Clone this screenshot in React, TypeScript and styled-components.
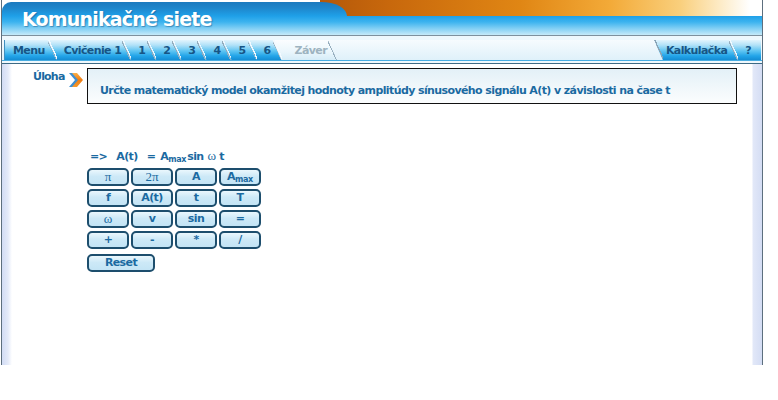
import React from "react";
import styled, { createGlobalStyle, css } from "styled-components";

const Global = createGlobalStyle`
  html, body { margin: 0; padding: 0; background: #ffffff; }
  body {
    font-family: "DejaVu Sans", Verdana, sans-serif;
    font-size: 11px;
    letter-spacing: -0.6px;
  }
`;

const TEXT_BLUE = "#1b6aa1";
const TAB_BLUE = "linear-gradient(#e2f4fd 0%, #b3e2f8 25%, #5ec4f2 55%, #22a4e8 80%, #158dd4 100%)";

const Frame = styled.div`
  margin-left: 1px;
  width: 760px;
  height: 365px;
  border-left: 1px solid #5d6f7e;
  border-right: 1px solid #5d6f7e;
  background: linear-gradient(
    to right,
    #d2dcf4 0px,
    #e4eaf9 6px,
    #ffffff 10px,
    #ffffff calc(100% - 10px),
    #e2e8f8 calc(100% - 9px),
    #d4ddf4 100%
  );
  display: flex;
  flex-direction: column;
`;

const Header = styled.header`
  display: flex;
  height: 35px;
  border-bottom: 1px solid #7e909d;
  background: #ffffff
    linear-gradient(
      to right,
      #b4580a 0px,
      #c8680c 70px,
      #e08614 200px,
      #f3aa38 290px,
      #f9cf7c 360px,
      #fdebc6 400px,
      #ffffff 430px
    )
    318px 0 / calc(100% - 318px) 16px no-repeat;
`;

const blueStops = (offset: number) => `linear-gradient(
  to bottom,
  #1a72b6 ${-2 - offset}px,
  #1e86cb ${8 - offset}px,
  #1fa0e8 ${16 - offset}px,
  #3cb3ef ${22 - offset}px,
  #7ccdf4 ${28 - offset}px,
  #c6eaf9 ${35 - offset}px
)`;

const TitleBlock = styled.div`
  width: 345px;
  margin-top: 2px;
  border-radius: 9px 26px 0 0 / 9px 14px 0 0;
  background: ${blueStops(2)};
  padding: 2px 0 0 20px;
  box-sizing: border-box;
`;

const Title = styled.h1`
  margin: 0;
  font-size: 19px;
  line-height: 30px;
  letter-spacing: -0.8px;
  font-weight: bold;
  color: #ffffff;
  text-shadow: 1px 1px 1px rgba(10, 70, 120, 0.45);
  white-space: nowrap;
`;

const RightBand = styled.div`
  flex: 1;
  margin-top: 16px;
  background: ${blueStops(16)};
`;

const NavStrip = styled.div`
  padding: 4px 0 2px;
  background: #eef8fd;
  border-bottom: 1px solid #3d6a84;
`;

const TabRow = styled.nav`
  display: flex;
  height: 20px;
  padding: 0 1px 0 2px;
  background: linear-gradient(#f6fbfe, #dff1fa);
  border-bottom: 1px solid #47ace1;
`;

const TabGroup = styled.div<{ $right?: boolean }>`
  display: flex;
  ${(p) => p.$right && css`margin-left: auto;`}
`;

const edgeLeft = (c: string) =>
  `linear-gradient(to top right, transparent 50%, ${c} 50%, ${c} calc(50% + 1.3px), transparent calc(50% + 1.3px)) left top / 9px 100% no-repeat`;
const edgeRight = `linear-gradient(to top right, transparent calc(50% - 1px), #93abbc calc(50% - 1px), #93abbc 50%, transparent 50%) right top / 9px 100% no-repeat`;

const Tab = styled.a<{ $first?: boolean; $last?: boolean; $off?: boolean; $pl?: number; $pr?: number }>`
  display: flex;
  align-items: center;
  height: 20px;
  box-sizing: border-box;
  padding: 1px ${(p) => p.$pr ?? 11}px 0 ${(p) => p.$pl ?? 16}px;
  margin-left: -9px;
  font-weight: bold;
  color: ${(p) => (p.$off ? "#9db3c0" : "#175585")};
  white-space: nowrap;
  cursor: pointer;
  clip-path: polygon(0 0, calc(100% - 9px) 0, 100% 100%, 9px 100%);
  background: ${edgeLeft("#f3faff")}, ${edgeRight},
    ${(p) => (p.$off ? "linear-gradient(#fbfdff, #eaf6fc 60%, #d5ecf8)" : TAB_BLUE)};
  ${(p) =>
    p.$first &&
    css`
      margin-left: 0;
      clip-path: polygon(0 0, calc(100% - 9px) 0, 100% 100%, 0 100%);
      background: ${edgeRight}, ${TAB_BLUE};
      border-left: 1px solid #3f8fc0;
    `}
  ${(p) =>
    p.$last &&
    css`
      clip-path: polygon(0 0, 100% 0, 100% 100%, 9px 100%);
      background: ${edgeLeft("#f3faff")}, ${TAB_BLUE};
    `}
`;

const EdgeTab = styled(Tab)`
  background: ${edgeLeft("#8aa3b5")}, ${edgeRight}, ${TAB_BLUE};
`;

const Content = styled.main`
  padding: 4px 0 0 31px;
`;

const TaskRow = styled.div`
  display: flex;
  align-items: flex-start;
`;

const TaskLabel = styled.span`
  width: 32px;
  font-weight: bold;
  color: ${TEXT_BLUE};
  line-height: 13px;
  letter-spacing: -0.8px;
  margin-top: 2px;
  white-space: nowrap;
`;

const ArrowIcon = styled.svg`
  margin: 4px 0 0 3px;
  flex: none;
`;

const TaskBox = styled.div`
  margin-left: 3px;
  width: 650px;
  height: 36px;
  box-sizing: border-box;
  border: 1px solid #111111;
  padding: 15px 0 0 12px;
  background: linear-gradient(#e3f0f7, #f2f8fb 60%, #fbfdfe);
  font-weight: bold;
  line-height: 13px;
  color: ${TEXT_BLUE};
  white-space: nowrap;
`;

const Calc = styled.section`
  margin: 45px 0 0 54px;
  display: flex;
  flex-direction: column;
  align-items: flex-start;
`;

const Formula = styled.div`
  display: flex;
  align-items: baseline;
  padding-left: 3px;
  font-weight: bold;
  line-height: 13px;
  color: ${TEXT_BLUE};
  white-space: nowrap;
`;

const Part = styled.span<{ $gap?: number; $serif?: boolean }>`
  margin-left: ${(p) => p.$gap ?? 0}px;
  ${(p) =>
    p.$serif &&
    css`
      font-family: "Liberation Serif", "DejaVu Serif", serif;
      font-weight: normal;
      font-size: 13px;
      letter-spacing: 0;
    `}
`;

const Sub = styled.sub`
  font-size: 8px;
  letter-spacing: -0.3px;
  vertical-align: -2px;
  line-height: 0;
`;

const KeyGrid = styled.div`
  margin-top: 5px;
  display: grid;
  grid-template-columns: repeat(4, 42px);
  grid-auto-rows: 18px;
  column-gap: 2px;
  row-gap: 3px;
`;

const Key = styled.button<{ $serif?: boolean; $wide?: boolean }>`
  width: ${(p) => (p.$wide ? 68 : 42)}px;
  height: 18px;
  box-sizing: border-box;
  padding: 0;
  border: 2px solid #1d4e6d;
  border-radius: 5px;
  background: linear-gradient(#eaf7fd, #cde9f7 45%, #c3e4f5);
  text-align: center;
  font-family: "DejaVu Sans", Verdana, sans-serif;
  font-weight: bold;
  font-size: 11px;
  line-height: 14px;
  letter-spacing: -0.6px;
  color: ${TEXT_BLUE};
  cursor: pointer;
  ${(p) =>
    p.$serif &&
    css`
      font-family: "Liberation Serif", "DejaVu Serif", serif;
      font-weight: normal;
      font-size: 13px;
      letter-spacing: 0;
    `}
`;

const ResetKey = styled(Key)`
  margin-top: 5px;
`;

const leftTabs = ["1", "2", "3", "4", "5", "6"];

type KeyDef = { label: React.ReactNode; serif?: boolean };
const keys: KeyDef[] = [
  { label: "π", serif: true },
  { label: "2π", serif: true },
  { label: "A" },
  { label: <>A<Sub>max</Sub></> },
  { label: "f" },
  { label: "A(t)" },
  { label: "t" },
  { label: "T" },
  { label: "ω", serif: true },
  { label: "v" },
  { label: "sin" },
  { label: "=" },
  { label: "+" },
  { label: "-" },
  { label: "*" },
  { label: "/" },
];

export default function App() {
  return (
    <>
      <Global />
      <Frame>
        <Header>
          <TitleBlock>
            <Title>Komunikačné siete</Title>
          </TitleBlock>
          <RightBand />
        </Header>
        <NavStrip>
          <TabRow>
            <TabGroup>
              <Tab $first $pl={8} $pr={12}>Menu</Tab>
              <Tab $pr={10}>Cvičenie 1</Tab>
              {leftTabs.map((t) => (
                <Tab key={t}>{t}</Tab>
              ))}
              <Tab $off $pl={22} $pr={10}>Záver</Tab>
            </TabGroup>
            <TabGroup $right>
              <EdgeTab $pl={12}>Kalkulačka</EdgeTab>
              <Tab $last $pr={10}>?</Tab>
            </TabGroup>
          </TabRow>
        </NavStrip>
        <Content>
          <TaskRow>
            <TaskLabel>Úloha</TaskLabel>
            <ArrowIcon width="16" height="16" viewBox="0 0 16 16">
              <defs>
                <linearGradient id="og" x1="0" y1="0" x2="0" y2="1">
                  <stop offset="0" stopColor="#f9b04a" />
                  <stop offset="0.5" stopColor="#f07d12" />
                  <stop offset="1" stopColor="#f59a2c" />
                </linearGradient>
              </defs>
              <polygon points="1,1 5,1 11,8 5,15 1,15 7,8" fill="#3f8fd0" />
              <polygon points="4,1 9,1 15,8 9,15 4,15 10,8" fill="url(#og)" />
            </ArrowIcon>
            <TaskBox>
              Určte matematický model okamžitej hodnoty amplitúdy sínusového signálu A(t) v závislosti na čase t
            </TaskBox>
          </TaskRow>
          <Calc>
            <Formula>
              <Part>=&gt;</Part>
              <Part $gap={9}>A(t)</Part>
              <Part $gap={9}>=</Part>
              <Part $gap={5}>
                A<Sub>max</Sub>
              </Part>
              <Part $gap={1}>sin</Part>
              <Part $gap={4} $serif>
                ω
              </Part>
              <Part $gap={3}>t</Part>
            </Formula>
            <KeyGrid>
              {keys.map((k, i) => (
                <Key key={i} $serif={k.serif}>
                  <span>{k.label}</span>
                </Key>
              ))}
            </KeyGrid>
            <ResetKey $wide>Reset</ResetKey>
          </Calc>
        </Content>
      </Frame>
    </>
  );
}
